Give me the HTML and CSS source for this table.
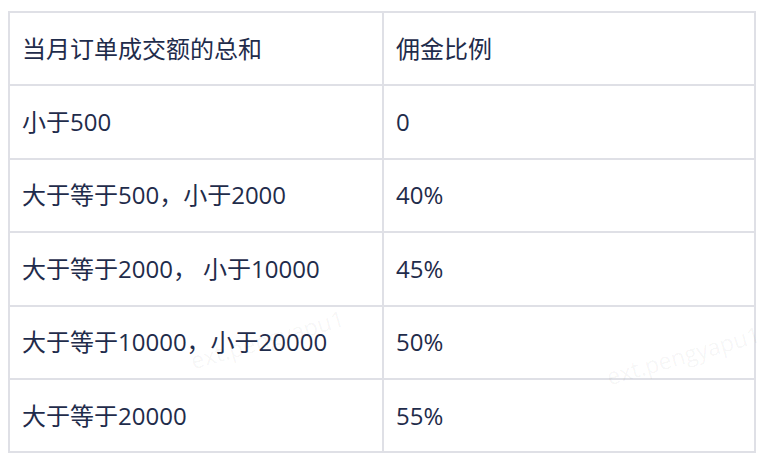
FILE: index.html
```html
<!DOCTYPE html>
<html lang="zh">
<head>
<meta charset="utf-8">
<link rel="stylesheet" href="styles.css">
</head>
<body>
<div class="wrap">
  <table class="rates">
    <tr><td class="c1">当月订单成交额的总和</td><td>佣金比例</td></tr>
    <tr><td class="c1">小于500</td><td>0</td></tr>
    <tr><td class="c1">大于等于500，小于2000</td><td>40%</td></tr>
    <tr><td class="c1">大于等于2000， 小于10000</td><td>45%</td></tr>
    <tr><td class="c1">大于等于10000，小于20000</td><td>50%</td></tr>
    <tr><td class="c1">大于等于20000</td><td>55%</td></tr>
  </table>
  <div class="wm wm1">ext.pengyapu1</div>
  <div class="wm wm2">ext.pengyapu1</div>
</div>
</body>
</html>
```
FILE: styles.css
```css
html, body {
  margin: 0;
  padding: 0;
  background: #ffffff;
}
body {
  padding: 11px 0 0 8px;
  font-family: "Open Sans", "Noto Sans CJK SC", sans-serif;
  color: #1f2c4b;
}
.wrap {
  position: relative;
  width: 748px;
}
.rates {
  border-collapse: collapse;
  width: 748px;
  table-layout: fixed;
  border: 2px solid #dfe0e6;
}
.rates td {
  border: 2px solid #dfe0e6;
  height: 73.4px;
  box-sizing: border-box;
  padding: 0 0 0 12px;
  font-size: 24px;
  line-height: 32px;
  vertical-align: middle;
  white-space: nowrap;
}
.rates td.c1 {
  width: 374px;
}
.wm {
  position: absolute;
  font-family: "Open Sans", sans-serif;
  font-size: 23px;
  color: rgba(0, 0, 0, 0.045);
  transform: rotate(-16deg);
  pointer-events: none;
  white-space: nowrap;
}
.wm1 {
  left: 180px;
  top: 312px;
}
.wm2 {
  left: 596px;
  top: 328px;
}
```
